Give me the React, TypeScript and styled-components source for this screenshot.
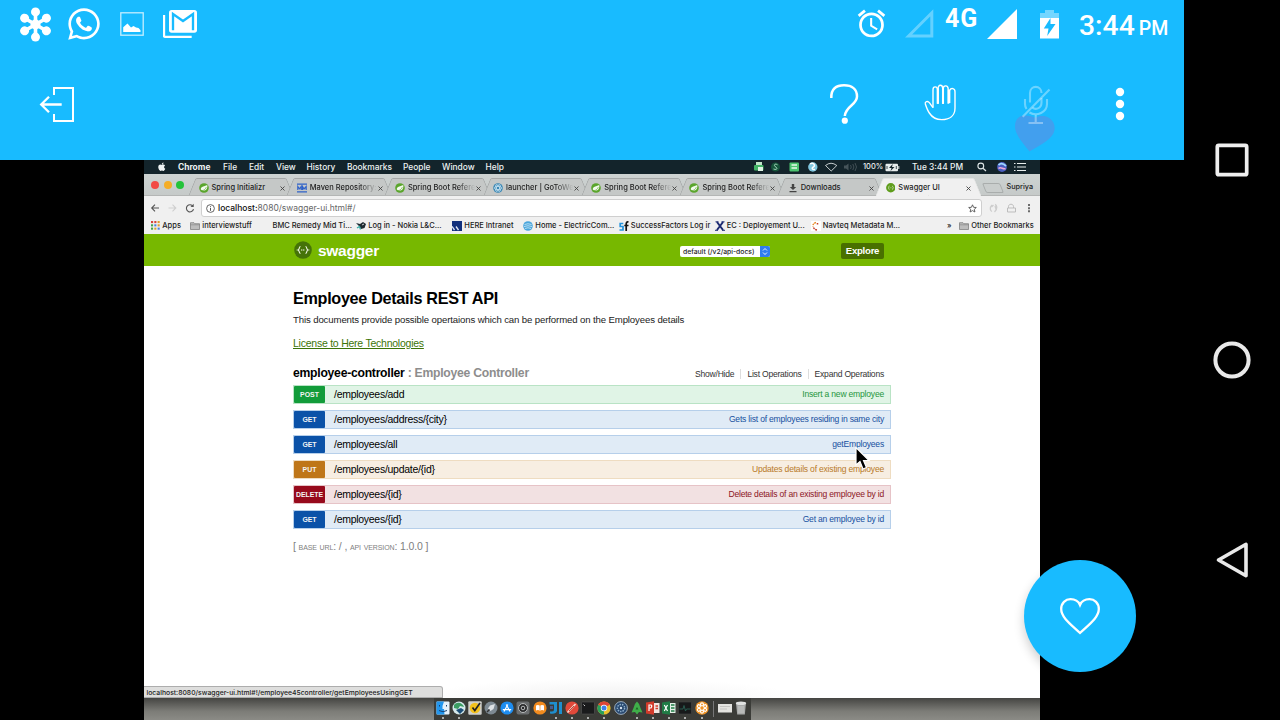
import React from "react";
import styled, { createGlobalStyle } from "styled-components";
import { FaWhatsapp, FaApple } from "react-icons/fa";
import { MdAlarm } from "react-icons/md";

const BLUE = "#18bbff";

const GlobalStyle = createGlobalStyle`
  * { box-sizing: border-box; }
  body { margin: 0; background: #000; }
  svg { display: block; flex: none; }
`;

/* ---------- device frame ---------- */

const Device = styled.div`
  position: relative;
  width: 1280px;
  height: 720px;
  display: grid;
  grid-template-columns: 1184px 96px;
  background: #000;
  overflow: hidden;
`;

const AppColumn = styled.div`
  display: flex;
  flex-direction: column;
`;

const AppHeader = styled.header`
  height: 160px;
  background: ${BLUE};
  color: #fff;
  display: flex;
  flex-direction: column;
`;

const StatusBar = styled.div`
  height: 48px;
  padding: 0 16px 0 19px;
  display: flex;
  align-items: center;
  justify-content: space-between;
`;

const StatusGroup = styled.div`
  display: flex;
  align-items: center;
  height: 48px;
`;

const Slot = styled.span<{ $gap?: number; $lift?: number }>`
  display: flex;
  margin-left: ${(p) => p.$gap ?? 0}px;
  padding-bottom: ${(p) => p.$lift ?? 0}px;
`;

const Network = styled.span`
  margin-left: 11px;
  padding-bottom: 12px;
  width: 38px;
  font: 700 25px/25px Roboto, sans-serif;
  letter-spacing: 0.8px;
`;

const Clock = styled.span`
  margin-left: 20px;
  padding-top: 7px;
  width: 89px;
  white-space: nowrap;
  font: 500 28.3px/34px Roboto, sans-serif;
  small { font-size: 19.5px; margin-left: 4px; }
`;

const ActionBar = styled.div`
  height: 112px;
  padding: 0 59px 0 39px;
  display: flex;
  align-items: center;
  justify-content: space-between;
`;

const Actions = styled.div`
  display: flex;
  align-items: center;
  height: 112px;
`;

const MutedMicSlot = styled.span`
  display: flex;
  margin-left: 57px;
  padding-top: 30px;
`;

const NavBar = styled.nav`
  display: flex;
  flex-direction: column;
  align-items: center;
  justify-content: center;
`;

const NavKey = styled.span`
  height: 200px;
  display: flex;
  align-items: center;
`;

const HeartButton = styled.button`
  position: absolute;
  left: 1024px;
  top: 560px;
  width: 112px;
  height: 112px;
  padding: 0;
  border: 0;
  border-radius: 50%;
  background: ${BLUE};
  display: flex;
  align-items: center;
  justify-content: center;
  box-shadow: 0 5px 11px rgba(0, 0, 0, 0.2);
`;

/* ---------- shared desktop ---------- */

const Desktop = styled.main`
  position: relative;
  margin-left: 144px;
  width: 896px;
  height: 560px;
  background: #fff;
  font-family: Inter, "Liberation Sans", sans-serif;
  display: flex;
  flex-direction: column;
  overflow: hidden;
`;

const MenuBar = styled.div`
  height: 14px;
  flex: none;
  background: #13242b;
  color: #eef3f3;
  display: flex;
  align-items: center;
  padding-left: 13px;
`;

const MenuItem = styled.span<{ $w: number; $bold?: boolean }>`
  width: ${(p) => p.$w}px;
  flex: none;
  white-space: nowrap;
  font-size: 8.4px;
  line-height: 14px;
  font-weight: ${(p) => (p.$bold ? 700 : 500)};
`;

const MenuPercent = styled.span`
  width: 22px;
  margin-left: 4px;
  font-size: 7.5px;
  line-height: 14px;
  font-weight: 500;
`;

const MenuTime = styled.span`
  width: 65px;
  margin-left: 12px;
  font-size: 8.4px;
  line-height: 14px;
  font-weight: 500;
  white-space: nowrap;
`;

const TabStrip = styled.div`
  height: 22px;
  flex: none;
  background: linear-gradient(#cdd3d2, #c6cac9);
  border-bottom: 1px solid #b4b6b5;
  display: flex;
  align-items: flex-end;
`;

const Lights = styled.div`
  width: 45px;
  height: 19px;
  padding: 0 0 1px 7px;
  display: flex;
  align-items: center;
  gap: 4.6px;
`;

const Light = styled.i<{ $c: string }>`
  width: 8px;
  height: 8px;
  border-radius: 50%;
  background: ${(p) => p.$c};
`;

const Tab = styled.div<{ $active?: boolean }>`
  position: relative;
  z-index: ${(p) => (p.$active ? 2 : 0)};
  width: 98.2px;
  height: ${(p) => (p.$active ? 18 : 17)}px;
  margin-bottom: ${(p) => (p.$active ? -1 : 0)}px;
  flex: none;
  display: flex;
  align-items: center;
  padding: ${(p) => (p.$active ? 2 : 3)}px 0 0 9.5px;
  &::before, &::after {
    content: "";
    position: absolute;
    z-index: -1;
    top: 0;
    bottom: 0;
    background: ${(p) => (p.$active ? "#f0f0f0" : "#c5c8c7")};
    border: 1px solid ${(p) => (p.$active ? "#e2e4e3" : "#a5a8a8")};
    border-bottom: 0;
  }
  &::before { left: 3px; width: 52px; transform: skewX(-22deg); border-right: 0; border-top-left-radius: 2px; }
  &::after { right: -3px; width: 52px; transform: skewX(22deg); border-left: 0; border-top-right-radius: 2px; }
`;

const TabTitle = styled.span<{ $fade?: boolean }>`
  margin-left: 3px;
  width: 68px;
  flex: none;
  white-space: nowrap;
  font-size: 7.5px;
  line-height: 14px;
  font-weight: 500;
  color: #222;
  ${(p) => p.$fade && "mask-image: linear-gradient(90deg, #000 72%, transparent 99%);"}
`;

const NewTab = styled.i`
  width: 18px;
  height: 10px;
  margin: 0 0 2px 9px;
  border: 1px solid #a9adac;
  border-radius: 2px;
  background: #c9cdcc;
  transform: skewX(22deg);
`;

const Profile = styled.span`
  margin: 0 0 2px 5px;
  font-size: 7.3px;
  line-height: 12px;
  font-weight: 500;
  color: #222;
`;

const Toolbar = styled.div`
  height: 22px;
  flex: none;
  background: #f0f0f0;
  display: flex;
  align-items: center;
  padding: 2px 0 0 6px;
`;

const Omnibox = styled.div`
  width: 781px;
  height: 18px;
  margin-left: 6px;
  padding: 0 4px;
  background: #fff;
  border: 1px solid #cfcfcf;
  border-radius: 3px;
  display: flex;
  align-items: center;
`;

const Url = styled.span`
  flex: 1;
  margin-left: 3px;
  font-size: 8.5px;
  line-height: 16px;
  color: #666;
  b { font-weight: 500; color: #111; }
`;

const BookmarkBar = styled.div`
  height: 16px;
  flex: none;
  background: #f0f0f0;
  display: flex;
  align-items: center;
  padding: 0 0 1px 7px;
`;

const Bookmark = styled.span<{ $w: number }>`
  width: ${(p) => p.$w}px;
  flex: none;
  display: flex;
  align-items: center;
  gap: 2.3px;
  white-space: nowrap;
  font-size: 7.5px;
  line-height: 13px;
  font-weight: 500;
  color: #1c1c1c;
`;

/* ---------- swagger page ---------- */

const SwaggerBar = styled.div`
  height: 32px;
  flex: none;
  background: #77b800;
  font-family: "Liberation Sans", Arial, sans-serif;
  display: flex;
  align-items: center;
  padding: 0 156px 0 150px;
`;

const Brand = styled.span`
  margin: 1px 0 0 6px;
  width: 362px;
  color: #fff;
  font-weight: 700;
  font-size: 15.5px;
  line-height: 20px;
  letter-spacing: -0.28px;
`;

const SpecSelect = styled.span`
  width: 90px;
  height: 11px;
  margin-top: 2px;
  padding-left: 3px;
  background: #fff;
  border-radius: 2px;
  display: flex;
  align-items: center;
  justify-content: space-between;
  overflow: hidden;
  white-space: nowrap;
  font: 500 6.8px/11px Inter, sans-serif;
  color: #222;
`;

const ExploreButton = styled.span`
  width: 43px;
  height: 16px;
  margin: 1px 0 0 71px;
  border-radius: 2px;
  background: #497000;
  color: #fff;
  text-align: center;
  font-weight: 700;
  font-size: 9.6px;
  line-height: 16px;
  letter-spacing: -0.25px;
`;

const Page = styled.section`
  height: 432px;
  flex: none;
  padding: 22px 0 0 149px;
  background: radial-gradient(ellipse 190px 20px at 52% 100%, #f1f1f1, rgba(255, 255, 255, 0) 100%), #fff;
  font-family: "Liberation Sans", Arial, sans-serif;
  color: #000;
`;

const Title = styled.h1`
  margin: 0;
  font-size: 16.2px;
  line-height: 21px;
  letter-spacing: -0.31px;
`;

const Description = styled.p`
  margin: 3px 0 0;
  font-size: 9.6px;
  line-height: 15px;
  letter-spacing: -0.12px;
  color: #222;
`;

const License = styled.a`
  display: block;
  width: max-content;
  margin-top: 9px;
  font-size: 10.5px;
  line-height: 14px;
  letter-spacing: -0.24px;
  color: #3c7407;
  text-decoration: underline;
`;

const ControllerRow = styled.div`
  width: 598px;
  height: 15px;
  margin: 16px 0 4px;
  padding-right: 7px;
  display: flex;
  justify-content: space-between;
`;

const ControllerName = styled.h2`
  margin: 0;
  font-size: 12.2px;
  line-height: 15px;
  letter-spacing: -0.26px;
  span { color: #8d8d8d; }
`;

const Links = styled.div`
  display: flex;
  align-items: center;
  padding-top: 1px;
  font-size: 8.55px;
  line-height: 10px;
  letter-spacing: -0.22px;
  color: #333;
  span + span {
    margin-left: 6px;
    padding-left: 6px;
    border-left: 1px solid #ddd;
  }
`;

const Operation = styled.div<{ $bg: string; $line: string }>`
  width: 598px;
  height: 19px;
  margin-bottom: 6px;
  display: flex;
  background: ${(p) => p.$bg};
  border: 1px solid ${(p) => p.$line};
`;

const Method = styled.span<{ $c: string }>`
  width: 31px;
  background: ${(p) => p.$c};
  border-radius: 1px;
  color: #f4f4f4;
  text-align: center;
  font-size: 6.9px;
  line-height: 18px;
  font-weight: 700;
`;

const Path = styled.span`
  flex: 1;
  padding-left: 9px;
  font-size: 10.5px;
  line-height: 17px;
  letter-spacing: -0.28px;
`;

const Summary = styled.span<{ $c: string }>`
  padding-right: 6px;
  font-size: 8.55px;
  line-height: 17px;
  letter-spacing: -0.2px;
  color: ${(p) => p.$c};
`;

const BaseUrl = styled.p`
  margin: 5px 0 0;
  padding-top: 4px;
  font-size: 10.5px;
  line-height: 14px;
  letter-spacing: -0.12px;
  font-variant: small-caps;
  color: #808080;
`;

const LinkStatus = styled.div`
  position: absolute;
  left: 0;
  top: 526px;
  width: 299px;
  height: 12px;
  padding-left: 2.5px;
  background: #dededd;
  border: 1px solid #adadad;
  border-left: 0;
  border-radius: 0 3px 0 0;
  color: #222;
  font-size: 6.82px;
  line-height: 11px;
  font-weight: 500;
  white-space: nowrap;
`;

const Cursor = styled.svg`
  position: absolute;
  left: 711px;
  top: 286px;
`;

const Wallpaper = styled.div`
  height: 22px;
  flex: none;
  padding-left: 290px;
  background: linear-gradient(#454542, #7c7c77 60%, #8b8b86);
`;

const Dock = styled.div`
  width: 317px;
  height: 22px;
  padding: 3px 1px 0;
  background: #3b3c38;
  display: flex;
  gap: 1.2px;
`;

const DockItem = styled.span<{ $on?: boolean }>`
  width: 15px;
  height: 19px;
  flex: none;
  display: flex;
  flex-direction: column;
  align-items: center;
  &::after {
    content: "";
    width: 2px;
    height: 2px;
    margin-top: 1.5px;
    border-radius: 50%;
    background: ${(p) => (p.$on ? "#d5d5d5" : "transparent")};
  }
`;

const DockDivider = styled.i`
  width: 1px;
  height: 16px;
  margin: 0 2.5px;
  background: #777;
`;

/* ---------- icons ---------- */

const Flower = () => (
  <svg width="33" height="35" viewBox="19.1 6.5 33 35" fill="#fff" stroke="#fff">
    <circle cx="35.6" cy="24" r="5" stroke="none" />
    {[0, 60, 120, 180, 240, 300].map((a) => (
      <g key={a} transform={`rotate(${a} 35.6 24)`}>
        <path d="M35.6 24V12" strokeWidth="3.6" />
        <circle cx="35.6" cy="11.4" r="4.5" stroke="none" />
      </g>
    ))}
  </svg>
);

const Picture = () => (
  <svg width="24" height="24" viewBox="0 0 24 24">
    <rect x=".8" y=".8" width="22.4" height="22.4" fill="none" stroke="#fff" strokeOpacity=".75" strokeWidth="1.3" />
    <path d="M3.2 20V15.3L7.5 11.5 11 15.4 13.5 14 16 15.4 18.5 16 20.5 18.3V20Z" fill="#fff" />
  </svg>
);

const Gmail = () => (
  <svg width="34" height="28" viewBox="489 30 102 84">
    <path d="M492 45V107Q492 110.500 496 110.500H575" fill="none" stroke="#fff" strokeWidth="7" />
    <rect x="507" y="30" width="84" height="68" rx="8" fill="#fff" />
    <path d="M519 91V42L549 63L579 42V91" fill="none" stroke={BLUE} strokeWidth="7" />
  </svg>
);

const EmptySignal = () => (
  <svg width="29" height="29" viewBox="0 0 29 29">
    <path d="M3.600 27L26.800 3.800V27Z" fill="none" stroke="#fff" strokeWidth="3" opacity=".33" />
  </svg>
);

const FullSignal = () => (
  <svg width="30" height="30" viewBox="0 0 30 30">
    <path d="M0 30L30 0V30Z" fill="#fff" />
  </svg>
);

const Battery = () => (
  <svg width="19" height="29" viewBox="0 0 19 29">
    <path d="M0 8V3H5V0H14V3H19V8Z" fill="#fff" opacity=".4" />
    <path fillRule="evenodd" fill="#fff" d="M0 8H19V28.500H0ZM10.500 8L3.800 18.500H8.500L7.200 26L15.500 14H10.500Z" />
  </svg>
);

const Exit = () => (
  <svg width="36" height="38" viewBox="39 86 36 38" fill="none" stroke="#fff" strokeWidth="2">
    <path d="M54 96V89H73V122H54V115" />
    <path d="M61.700 105.500H41.500M49 97.700L41.200 105.500L49 113.300" strokeWidth="2.300" />
  </svg>
);

const Question = () => (
  <svg width="30" height="42" viewBox="829 83 30 42" fill="none" stroke="#fff" strokeWidth="2.500">
    <path d="M831.300 98C831 89 836 85.300 844 85.300C852 85.300 857 89.500 857 96.500C857 105 845.500 106 844.800 116" />
    <circle cx="844.800" cy="120.700" r="3.100" fill="#fff" stroke="none" />
  </svg>
);

const Hand = () => (
  <svg width="34" height="38" viewBox="369 249 102 114" fill="none" stroke="#fff" strokeWidth="4.200">
    <path d="M399 320L388 305C383 298 374 302 376 309C379 318 383 329 388 336C397 350 408 356 425 356C449 356 465 344 465 321V272C465 261 453 260 449 268V306" />
    <path d="M399 320V266C399 255 412 255 412.500 266V308" />
    <path d="M414.500 308V262C414 250 427 250 428 261V308" />
    <path d="M430 308V262C430 251 444 253 444.500 263V308" />
    <path d="M413.500 262V308M429 262V308M446.500 266V307" strokeWidth="6" />
  </svg>
);

const MutedMic = () => (
  <svg width="42" height="70" viewBox="1014 84 42 70">
    <path
      d="M1029.500 151.500C1024 144 1015 135 1015 126.500C1015 118.500 1020 115 1026 115.500C1031 116 1034 117 1035.500 118C1038 116 1042 115.500 1046 116.500C1052 118.500 1055.500 124 1054.500 130C1053 139 1042 144 1029.500 151.500Z"
      fill="#429fee"
    />
    <g fill="none" stroke="#fff" strokeOpacity=".36" strokeWidth="2.100">
      <path d="M1030 102.500V93C1030 84.800 1041.500 84.800 1041.500 93" />
      <path d="M1041.500 98V102.500C1041.500 109 1035 110 1032.500 107.500" />
      <path d="M1025 99V104C1025 106 1025.500 107.500 1026.500 109M1029.500 112.500C1037 117 1047 112 1047 104V99" />
      <path d="M1035.700 115V123M1028.500 123H1043M1022.700 116.800L1049.500 89.500" />
    </g>
  </svg>
);

const Overflow = () => (
  <svg width="10" height="34" viewBox="0 0 10 34" fill="#fff">
    <circle cx="5" cy="5" r="4.200" />
    <circle cx="5" cy="17" r="4.200" />
    <circle cx="5" cy="29" r="4.200" />
  </svg>
);

const Leaf = () => (
  <svg width="10" height="10" viewBox="0 0 10 10">
    <circle cx="5" cy="5" r="4.800" fill="#5aa52c" />
    <path d="M1.800 6.500C1.800 3 6 3.800 8.200 1.800C9 5.500 7 8.300 3.200 7.600Z" fill="#f3faee" />
    <path d="M2.500 8C5 7.500 6.500 6 7.300 4.200" stroke="#5aa52c" strokeWidth=".7" fill="none" />
  </svg>
);

const MavenMark = () => (
  <svg width="10" height="10" viewBox="0 0 10 10" stroke="#2f62c9" fill="none">
    <path d="M0 1.200H10M0 8.800H10" strokeWidth="1.200" />
    <path d="M.8 7V3.500L2.500 5.800L4.200 3.500V7M5.500 7V3.500L7 6L9.200 3.500V7" strokeWidth="1.200" />
  </svg>
);

const Atom = () => (
  <svg width="10" height="10" viewBox="0 0 10 10">
    <circle cx="5" cy="5" r="4.800" fill="#3b87b4" />
    <g fill="none" stroke="#cfe8f5" strokeWidth=".7">
      <ellipse cx="5" cy="5" rx="3.800" ry="1.600" />
      <ellipse cx="5" cy="5" rx="3.800" ry="1.600" transform="rotate(60 5 5)" />
      <ellipse cx="5" cy="5" rx="3.800" ry="1.600" transform="rotate(120 5 5)" />
    </g>
  </svg>
);

const DownloadMark = () => (
  <svg width="10" height="10" viewBox="0 0 10 10">
    <path d="M3.800 1H6.200V4H8.200L5 7L1.800 4H3.800ZM1.500 8H8.500V9.200H1.500Z" fill="#444" />
  </svg>
);

const Braces = ({ size, bg }: { size: number; bg: string }) => (
  <svg width={size} height={size} viewBox="0 0 18 18">
    <circle cx="9" cy="9" r="8.800" fill={bg} />
    <g fill="none" stroke="#f1f7e8" strokeWidth="1.100">
      <path d="M6.500 5.500C4.800 5.500 5.800 8.500 4 9C5.800 9.500 4.800 12.500 6.500 12.500" />
      <path d="M11.500 5.500C13.200 5.500 12.200 8.500 14 9C12.200 9.500 13.200 12.500 11.500 12.500" />
      <path d="M7 9H11" strokeDasharray="1.300 .6" />
    </g>
  </svg>
);

const Close = () => (
  <svg width="5" height="5" viewBox="0 0 5 5">
    <path d="M.5 .5L4.500 4.500M4.500 .5L.5 4.500" stroke="#444" strokeWidth=".9" />
  </svg>
);

const Folder = () => (
  <svg width="10" height="8" viewBox="0 0 10 8">
    <path d="M.5 7.500V.7H4L4.800 1.700H9.500V7.500Z" fill="#bdbdbd" stroke="#777" strokeWidth=".7" />
    <path d="M.5 2.800H9.500" stroke="#777" strokeWidth=".5" />
  </svg>
);

const AppsGrid = () => {
  const colors = ["#d9453b", "#d9453b", "#e39b2c", "#46a24b", "#4b7fe0", "#e39b2c", "#46a24b", "#d9a52c", "#4b7fe0"];
  return (
    <svg width="9" height="9" viewBox="0 0 9 9">
      {colors.map((c, i) => (
        <rect key={i} x={(i % 3) * 3.3} y={Math.floor(i / 3) * 3.3} width="2.100" height="2.100" fill={c} />
      ))}
    </svg>
  );
};

const MenuExtras = () => (
  <svg width="106" height="12" viewBox="753 161 106 12" fill="none">
    <rect x="756" y="162" width="6" height="4" fill="#bfe5c8" />
    <rect x="754" y="165" width="9.500" height="5.500" rx="1" fill="#42b265" />
    <rect x="758" y="167" width="5" height="4" fill="#dff4e4" />
    <circle cx="775.500" cy="167" r="4.500" fill="#16553b" />
    <path d="M777.500 164.800C775 163.200 773.500 165 775 166.500C777.500 167.500 778 170.500 773.500 169" stroke="#a9dcc0" />
    <rect x="789.500" y="162.500" width="9.500" height="9" rx="1" fill="#4cc46f" />
    <path d="M791.500 165H797M791.500 168H797" stroke="#e6f9ec" strokeWidth="1.500" />
    <circle cx="812.800" cy="167" r="4.700" fill="#7fc6df" />
    <path d="M810 164C813 162 816 165 813.500 167C811 168 812.500 170 815 169.500" stroke="#fff" strokeWidth="1.500" />
    <path d="M825.500 165.500Q831 161 836.800 165.500L831.200 171Z" stroke="#d8dfe0" strokeWidth=".9" />
    <path d="M844 165.500H846L848.500 163.500V170.500L846 168.500H844Z" fill="#46545a" />
    <path d="M850.500 165Q852 167 850.500 169M852.800 164Q855 167 852.800 170M855 163Q858 167 855 171" stroke="#46545a" strokeWidth=".9" />
  </svg>
);

const MenuBattery = () => (
  <svg width="15" height="9" viewBox="0 0 15 9">
    <rect x=".5" y=".8" width="12.500" height="7.400" rx="1" fill="#e6ecec" />
    <path d="M13.800 3V6" stroke="#e6ecec" />
    <path d="M7.800 1L4 5H6.500L5.500 8L9.500 4H7Z" fill="#13242b" />
    <path d="M2 3V6M11.300 3V6" stroke="#13242b" strokeWidth=".8" />
  </svg>
);

const MenuTail = () => (
  <svg width="50" height="12" viewBox="977 161 50 12" fill="none">
    <circle cx="980.800" cy="166" r="2.900" stroke="#dfe6e7" strokeWidth="1.100" />
    <path d="M983 168.300L986 171" stroke="#dfe6e7" strokeWidth="1.200" />
    <circle cx="1002" cy="167" r="4.900" fill="#4a5ec0" />
    <path d="M998.500 165C1001 162.500 1004 164 1006 166" stroke="#9fd8ff" strokeWidth="1.800" />
    <path d="M998.500 168.500C1001 166 1003 170 1005.500 168.500" stroke="#f0a9d8" strokeWidth="1.500" />
    <path d="M1014 163.500H1015.500M1017 163.500H1026M1014 167H1015.500M1017 167H1026M1014 170.500H1015.500M1017 170.500H1026" stroke="#e8eeee" strokeWidth="1.200" />
  </svg>
);

const NavArrows = () => (
  <svg width="45" height="10" viewBox="150 203 45 10" fill="none" strokeWidth="1.100">
    <path d="M159 208H152M155 204.700L151.700 208L155 211.300" stroke="#555" />
    <path d="M168.500 208H175.500M172.500 204.700L175.800 208L172.500 211.300" stroke="#cfcfcf" />
    <path d="M193 206.300A3.600 3.600 0 1 0 193.500 209.200" stroke="#555" />
    <path d="M193.700 203.800V207H190.500Z" fill="#555" />
  </svg>
);

const Info = () => (
  <svg width="9" height="9" viewBox="0 0 9 9" fill="none" stroke="#555">
    <circle cx="4.500" cy="4.500" r="3.900" strokeWidth=".9" />
    <path d="M4.500 4V6.800M4.500 2.200V3.200" strokeWidth="1" />
  </svg>
);

const Star = () => (
  <svg width="9" height="9" viewBox="0 0 9 9">
    <path d="M4.500 .8L5.600 3.300L8.300 3.500L6.300 5.300L6.900 8L4.500 6.600L2.100 8L2.700 5.300L.7 3.500L3.400 3.300Z" fill="none" stroke="#555" strokeWidth=".9" />
  </svg>
);

const Extensions = () => (
  <svg width="45" height="10" viewBox="988 203 45 10" fill="none">
    <path d="M992 205C989 208 990.500 211 992 211.500M991.500 207L993.500 205M994.500 212C998 209 997 205 995 204.500M995 206L996 209" stroke="#cdcdcd" strokeWidth="1.300" />
    <path d="M1008.500 208V206.500C1008.500 203.500 1013.500 203.500 1013.500 206.500V208M1007.500 208H1015.500V212H1007.500Z" stroke="#bdbdbd" strokeWidth="1" />
    <path d="M1029 204V206M1029 207.200V209.200M1029 210.300V212.300" stroke="#555" strokeWidth="1.700" />
  </svg>
);

const Favicon = ({ kind }: { kind: string }) => (
  <svg width="10" height="10" viewBox="0 0 10 10" fill="none">
    {kind === "bird" && (
      <>
        <path d="M0 2L4 3L7 1L10 3L8.500 7L5 8L3.500 5.500Z" fill="#1d2a31" />
        <path d="M1 7L3.500 5.500L4.500 8.500" stroke="#35a9a5" strokeWidth="1.300" />
        <path d="M6 4L8 3" stroke="#fff" strokeWidth=".8" />
      </>
    )}
    {kind === "here" && (
      <>
        <rect width="10" height="10" fill="#12307c" />
        <path d="M0 5.500L2.500 9M4 5.500L6.500 9" stroke="#dfe6f4" strokeWidth="1.300" />
      </>
    )}
    {kind === "electric" && (
      <>
        <circle cx="5" cy="5" r="4.800" fill="#4aa6dc" />
        <path d="M1.500 3.500Q5 2 8.500 3.500M1 5.500Q5 4 9 5.500M2 7.500Q5 6 8 7.500" stroke="#d4ecf8" strokeWidth=".8" />
      </>
    )}
    {kind === "sf" && (
      <>
        <path d="M4.300 2.500H1.200V5.500H4V9H.5" stroke="#2493dd" strokeWidth="1.700" />
        <path d="M9.500 1C7.500 .5 7.200 2 7.200 3V10M5.300 4.500H9.500" stroke="#111" strokeWidth="1.700" />
      </>
    )}
    {kind === "x" && (
      <>
        <path d="M2 1L8 9M8 1L2 9" stroke="#1c2a72" strokeWidth="2" />
        <path d="M0 9.300H3M7 9.300H10M.5 .8H3.500M6.500 .8H9.500" stroke="#1c2a72" />
      </>
    )}
    {kind === "navteq" && (
      <>
        <rect width="10" height="10" fill="#fff" />
        <path d="M5 1.500Q1.500 2.500 2 5.500" stroke="#e98c2a" strokeWidth="1.500" strokeDasharray="1.800 .7" />
        <path d="M2.500 6.500Q3.500 8.500 6 9M6.500 2V3.500" stroke="#c33c2c" strokeWidth="1.500" strokeDasharray="1.800 .7" />
      </>
    )}
  </svg>
);

const dockArt: React.ReactNode[] = [
  <>
    <rect x=".5" y=".5" width="13" height="13" rx="1" fill="#e4f1fb" />
    <path d="M.5 .5H8Q6 5 6.500 8H8L8.500 13.500H.5Z" fill="#2196ee" />
    <path d="M3.500 4V5.500M10.500 4V5.500M3 9.500Q7 12 11 9.500" stroke="#17406e" fill="none" />
  </>,
  <>
    <circle cx="7" cy="7" r="6.500" fill="#d5e8ea" />
    <path d="M2 4C5 0 11 2 12 6L8 5L6 8L2 7Z" fill="#3c9c62" />
    <path d="M4 9L9 7L12 9L8 13Z" fill="#1c4e77" />
  </>,
  <>
    <rect x=".3" y=".3" width="13.400" height="13.400" rx="1" fill="#cfcfcb" />
    <circle cx="7" cy="7" r="5.300" fill="#f3c11c" />
    <path d="M4.500 6.500L6.800 9.500L12 2" stroke="#222" strokeWidth="1.700" fill="none" />
  </>,
  <>
    <circle cx="7" cy="7" r="6.500" fill="#7e8a93" />
    <path d="M11 3L9.500 8L6.500 10L4 7.500L6 4.500Z" fill="#dfe3e6" />
    <path d="M3 11L5.500 8.500" stroke="#333" strokeWidth="1.500" />
  </>,
  <>
    <circle cx="7" cy="7" r="6.600" fill="#1d8df0" />
    <path d="M4 10.500L7.800 3.500M10 10.500L6.200 3.500M2.800 8.700H11.200" stroke="#fff" strokeWidth="1.200" />
  </>,
  <>
    <rect x=".5" y=".5" width="13" height="13" rx="2" fill="#6a6d6e" />
    <circle cx="7" cy="7" r="4.500" fill="#2a2b2c" stroke="#b9bcbd" strokeWidth="1" />
    <circle cx="7" cy="7" r="1.800" fill="none" stroke="#b9bcbd" />
  </>,
  <>
    <circle cx="7" cy="7" r="6.600" fill="#f18b1e" />
    <path d="M3 4.500Q5.500 3.500 7 5Q8.500 3.500 11 4.500V9.500Q8.500 8.500 7 10Q5.500 8.500 3 9.500Z" fill="#fff" />
    <path d="M7 5V10" stroke="#f18b1e" strokeWidth=".7" />
  </>,
  <>
    <path d="M.5 1H8V10Q7 13.500 1 12.500V10.500Q5 11 5 9V3.500H.5ZM10 1H13V13H10Z" fill="#1e8fd0" />
    <path d="M1 5H4V8H1Z" fill="#4a5b8f" />
  </>,
  <>
    <circle cx="7" cy="7" r="6.600" fill="#e1493a" />
    <path d="M2.500 11.500L10.500 3" stroke="#f4d9cf" strokeWidth="1.800" />
    <path d="M4 10L9 5" stroke="#9c2d22" strokeWidth=".8" />
  </>,
  <>
    <rect x=".5" y="1" width="13" height="12" rx="1" fill="#1a1b1c" stroke="#555" strokeWidth=".6" />
    <path d="M2.500 3.500L4 5" stroke="#ddd" strokeWidth=".9" />
  </>,
  <>
    <circle cx="7" cy="7" r="6.600" fill="#e9bf2d" />
    <path d="M7 7L1.300 3.700A6.600 6.600 0 0 1 12.700 3.700Z" fill="#dc4437" />
    <path d="M7 7L1.300 3.700A6.600 6.600 0 0 0 7 13.600Z" fill="#27a05b" />
    <circle cx="7" cy="7" r="3.200" fill="#fff" />
    <circle cx="7" cy="7" r="2.500" fill="#3f80ea" />
  </>,
  <>
    <circle cx="7" cy="7" r="6.400" fill="#26466d" stroke="#b7c8d8" strokeWidth=".8" />
    <circle cx="7" cy="7" r="3.600" fill="none" stroke="#8fb0cc" strokeWidth="1.500" strokeDasharray="1.500 1" />
    <circle cx="7" cy="7" r="1.200" fill="#d4e2ee" />
  </>,
  <>
    <path d="M7 .5Q10 3 10.500 7L12.500 11.500L9 11L7 13.500L5 11L1.500 11.500L3.500 7Q4 3 7 .5Z" fill="#3fae49" />
    <path d="M5.500 8.500L7 6L8.500 8.500Z" fill="#1d6427" />
  </>,
  <>
    <rect x="5" y="2" width="8.500" height="10" fill="#f1e5e1" />
    <path d="M0 1.500L8 .3V13.700L0 12.500Z" fill="#d23b2b" />
    <path d="M3 10V4H5Q6.500 4.500 5 7H3" stroke="#fff" strokeWidth="1.200" fill="none" />
    <path d="M9.500 5H12M9.500 7.500H12" stroke="#d23b2b" strokeWidth="1.300" />
  </>,
  <>
    <rect x="5" y="2" width="8.500" height="10" fill="#e4f0e7" />
    <path d="M0 1.500L8 .3V13.700L0 12.500Z" fill="#1f7b45" />
    <path d="M2.300 4L5.500 10M5.500 4L2.300 10" stroke="#fff" strokeWidth="1.200" />
    <path d="M9 4H12.500M9 7H12.500M9 10H12.500" stroke="#1f7b45" strokeWidth="1.500" />
  </>,
  <>
    <rect x=".5" y="1" width="13" height="12" rx="1" fill="#17191a" stroke="#444" strokeWidth=".6" />
    <path d="M1.500 8H5L6 4.500L7.500 10L8.500 8H12.500" stroke="#2c6a5a" strokeWidth=".8" fill="none" />
  </>,
  <>
    <circle cx="7" cy="7" r="6.700" fill="#ef9427" />
    {[0, 60, 120, 180, 240, 300].map((a) => (
      <circle key={a} cx="7" cy="3.400" r="1.500" fill="none" stroke="#fff" strokeWidth="1.100" transform={`rotate(${a} 7 7)`} />
    ))}
  </>,
];

const dockRunning = [0, 1, 7, 8, 9, 10, 12, 13, 14, 15, 16];

/* ---------- data ---------- */

const tabs = [
  { title: "Spring Initializr", icon: <Leaf /> },
  { title: "Maven Repository:", icon: <MavenMark />, fade: true },
  { title: "Spring Boot Referen", icon: <Leaf />, fade: true },
  { title: "launcher | GoToWe", icon: <Atom />, fade: true },
  { title: "Spring Boot Referen", icon: <Leaf />, fade: true },
  { title: "Spring Boot Referen", icon: <Leaf />, fade: true },
  { title: "Downloads", icon: <DownloadMark /> },
  { title: "Swagger UI", icon: <Braces size={9.5} bg="#5f9d1c" />, active: true },
];

const schemes: Record<string, { badge: string; bg: string; line: string; text: string }> = {
  POST: { badge: "#129c3a", bg: "#e0f4e6", line: "#b9e3c5", text: "#1f9640" },
  GET: { badge: "#0b52a8", bg: "#e0ebf6", line: "#b6cfea", text: "#1750a0" },
  PUT: { badge: "#bf7618", bg: "#f7eee2", line: "#eedcc1", text: "#b77a28" },
  DELETE: { badge: "#970a1c", bg: "#f2e1e2", line: "#e6c3c7", text: "#8c1524" },
};

const operations = [
  ["POST", "/employees/add", "Insert a new employee"],
  ["GET", "/employees/address/{city}", "Gets list of employees residing in same city"],
  ["GET", "/employees/all", "getEmployees"],
  ["PUT", "/employees/update/{id}", "Updates details of existing employee"],
  ["DELETE", "/employees/{id}", "Delete details of an existing employee by id"],
  ["GET", "/employees/{id}", "Get an employee by id"],
];

/* ---------- screen ---------- */

export default function App() {
  return (
    <Device>
      <GlobalStyle />
      <AppColumn>
        <AppHeader>
          <StatusBar>
            <StatusGroup>
              <Slot><Flower /></Slot>
              <Slot $gap={14} $lift={1}><FaWhatsapp size={36} /></Slot>
              <Slot $gap={18}><Picture /></Slot>
              <Slot $gap={19}><Gmail /></Slot>
            </StatusGroup>
            <StatusGroup>
              <Slot $lift={2}><MdAlarm size={33} /></Slot>
              <Slot $gap={17} $lift={1}><EmptySignal /></Slot>
              <Network>4G</Network>
              <Slot $gap={4}><FullSignal /></Slot>
              <Slot $gap={23}><Battery /></Slot>
              <Clock>3:44<small>PM</small></Clock>
            </StatusGroup>
          </StatusBar>
          <ActionBar>
            <Exit />
            <Actions>
              <Question />
              <Slot $gap={64} $lift={3}><Hand /></Slot>
              <MutedMicSlot><MutedMic /></MutedMicSlot>
              <Slot $gap={59}><Overflow /></Slot>
            </Actions>
          </ActionBar>
        </AppHeader>

        <Desktop>
          <MenuBar>
            <MenuItem $w={21}><FaApple size={9.5} /></MenuItem>
            <MenuItem $w={45} $bold>Chrome</MenuItem>
            <MenuItem $w={26}>File</MenuItem>
            <MenuItem $w={27}>Edit</MenuItem>
            <MenuItem $w={30.5}>View</MenuItem>
            <MenuItem $w={40.5}>History</MenuItem>
            <MenuItem $w={56}>Bookmarks</MenuItem>
            <MenuItem $w={39}>People</MenuItem>
            <MenuItem $w={43.5}>Window</MenuItem>
            <MenuItem $w={267.5}>Help</MenuItem>
            <MenuExtras />
            <MenuPercent>100%</MenuPercent>
            <MenuBattery />
            <MenuTime>Tue 3:44 PM</MenuTime>
            <MenuTail />
          </MenuBar>

          <TabStrip>
            <Lights>
              <Light $c="#f24a46" />
              <Light $c="#f5ae27" />
              <Light $c="#24c33a" />
            </Lights>
            {tabs.map((t, i) => (
              <Tab key={i} $active={t.active}>
                {t.icon}
                <TabTitle $fade={t.fade}>{t.title}</TabTitle>
                <Close />
              </Tab>
            ))}
            <NewTab />
            <Profile>Supriya</Profile>
          </TabStrip>

          <Toolbar>
            <NavArrows />
            <Omnibox>
              <Info />
              <Url><b>localhost:</b>8080/swagger-ui.html#/</Url>
              <Star />
            </Omnibox>
            <Slot $gap={6}><Extensions /></Slot>
          </Toolbar>

          <BookmarkBar>
            <Bookmark $w={39}><AppsGrid />Apps</Bookmark>
            <Bookmark $w={82.5}><Folder />interviewstuff</Bookmark>
            <Bookmark $w={83.5}>BMC Remedy Mid Ti...</Bookmark>
            <Bookmark $w={96}><Favicon kind="bird" />Log in - Nokia L&amp;C...</Bookmark>
            <Bookmark $w={71}><Favicon kind="here" />HERE Intranet</Bookmark>
            <Bookmark $w={95.5}><Favicon kind="electric" />Home - ElectricCom...</Bookmark>
            <Bookmark $w={96}><Favicon kind="sf" />SuccessFactors Log ir</Bookmark>
            <Bookmark $w={96}><Favicon kind="x" />EC : Deployement U...</Bookmark>
            <Bookmark $w={136.5}><Favicon kind="navteq" />Navteq Metadata M...</Bookmark>
            <Bookmark $w={12}>»</Bookmark>
            <Bookmark $w={76}><Folder />Other Bookmarks</Bookmark>
          </BookmarkBar>

          <SwaggerBar>
            <Braces size={18} bg="#457308" />
            <Brand>swagger</Brand>
            <SpecSelect>
              default (/v2/api-docs)
              <svg width="10" height="11" viewBox="0 0 10 11">
                <rect width="10" height="11" fill="#2f7df0" />
                <path d="M3 4.500L5 2.500L7 4.500M3 6.500L5 8.500L7 6.500" fill="none" stroke="#fff" strokeWidth=".9" />
              </svg>
            </SpecSelect>
            <ExploreButton>Explore</ExploreButton>
          </SwaggerBar>

          <Page>
            <Title>Employee Details REST API</Title>
            <Description>
              This documents provide possible opertaions which can be performed on the Employees details
            </Description>
            <License>License to Here Technologies</License>
            <ControllerRow>
              <ControllerName>
                employee-controller <span>: Employee Controller</span>
              </ControllerName>
              <Links>
                <span>Show/Hide</span>
                <span>List Operations</span>
                <span>Expand Operations</span>
              </Links>
            </ControllerRow>
            {operations.map(([method, path, summary], i) => {
              const s = schemes[method];
              return (
                <Operation key={i} $bg={s.bg} $line={s.line}>
                  <Method $c={s.badge}>{method}</Method>
                  <Path>{path}</Path>
                  <Summary $c={s.text}>{summary}</Summary>
                </Operation>
              );
            })}
            <BaseUrl>[ base url: / , api version: 1.0.0 ]</BaseUrl>
          </Page>

          <Wallpaper>
            <Dock>
              {dockArt.map((art, i) => (
                <DockItem key={i} $on={dockRunning.includes(i)}>
                  <svg width="14" height="14" viewBox="0 0 14 14">{art}</svg>
                </DockItem>
              ))}
              <DockDivider />
              <DockItem>
                <svg width="14" height="14" viewBox="0 0 14 14">
                  <rect y="3" width="14" height="8.500" fill="#e3e3df" />
                  <path d="M2 5.500H12M2 8H9" stroke="#bcbcb8" strokeWidth=".8" />
                </svg>
              </DockItem>
              <DockItem>
                <svg width="14" height="14" viewBox="0 0 14 14">
                  <path d="M2 2H12L10.800 13.500H3.200Z" fill="#a9abaa" />
                  <ellipse cx="7" cy="2.300" rx="5.200" ry="1.800" fill="#e0e2e1" />
                  <path d="M5 5V12M7 5V12M9 5V12" stroke="#d3d5d4" strokeWidth=".7" />
                </svg>
              </DockItem>
            </Dock>
          </Wallpaper>

          <LinkStatus>localhost:8080/swagger-ui.html#!/employee45controller/getEmployeesUsingGET</LinkStatus>
          <Cursor width="17" height="26" viewBox="0 0 17 26">
            <path d="M1 1.500V19L5 15.500L8 23L11.500 21.500L8.500 14.500H14Z" fill="#000" stroke="#fff" strokeWidth="1.200" />
          </Cursor>
        </Desktop>
      </AppColumn>

      <NavBar>
        <NavKey>
          <svg width="34" height="34" viewBox="0 0 34 34">
            <rect x="2.300" y="2.300" width="29.400" height="29.400" rx="1.500" fill="none" stroke="#efefef" strokeWidth="3.700" />
          </svg>
        </NavKey>
        <NavKey>
          <svg width="38" height="38" viewBox="0 0 38 38">
            <circle cx="19" cy="19" r="16.600" fill="none" stroke="#e9e9e9" strokeWidth="4" />
          </svg>
        </NavKey>
        <NavKey>
          <svg width="34" height="38" viewBox="0 0 34 38">
            <path d="M3.500 19L31 3.300V34.700Z" fill="none" stroke="#e9e9e9" strokeWidth="3.600" strokeLinejoin="round" />
          </svg>
        </NavKey>
      </NavBar>

      <HeartButton aria-label="Like">
        <svg width="42" height="38" viewBox="1059 597 42 38">
          <path
            d="M1080 633C1071 624.500 1061.200 617.500 1061.200 609C1061.200 603 1065.500 599.200 1070.500 599.200C1075 599.200 1078.500 601.500 1080 605C1081.500 601.500 1085 599.200 1089.500 599.200C1094.500 599.200 1098.800 603 1098.800 609C1098.800 617.500 1089 624.500 1080 633Z"
            fill="none"
            stroke="#fff"
            strokeWidth="2.300"
          />
        </svg>
      </HeartButton>
    </Device>
  );
}
